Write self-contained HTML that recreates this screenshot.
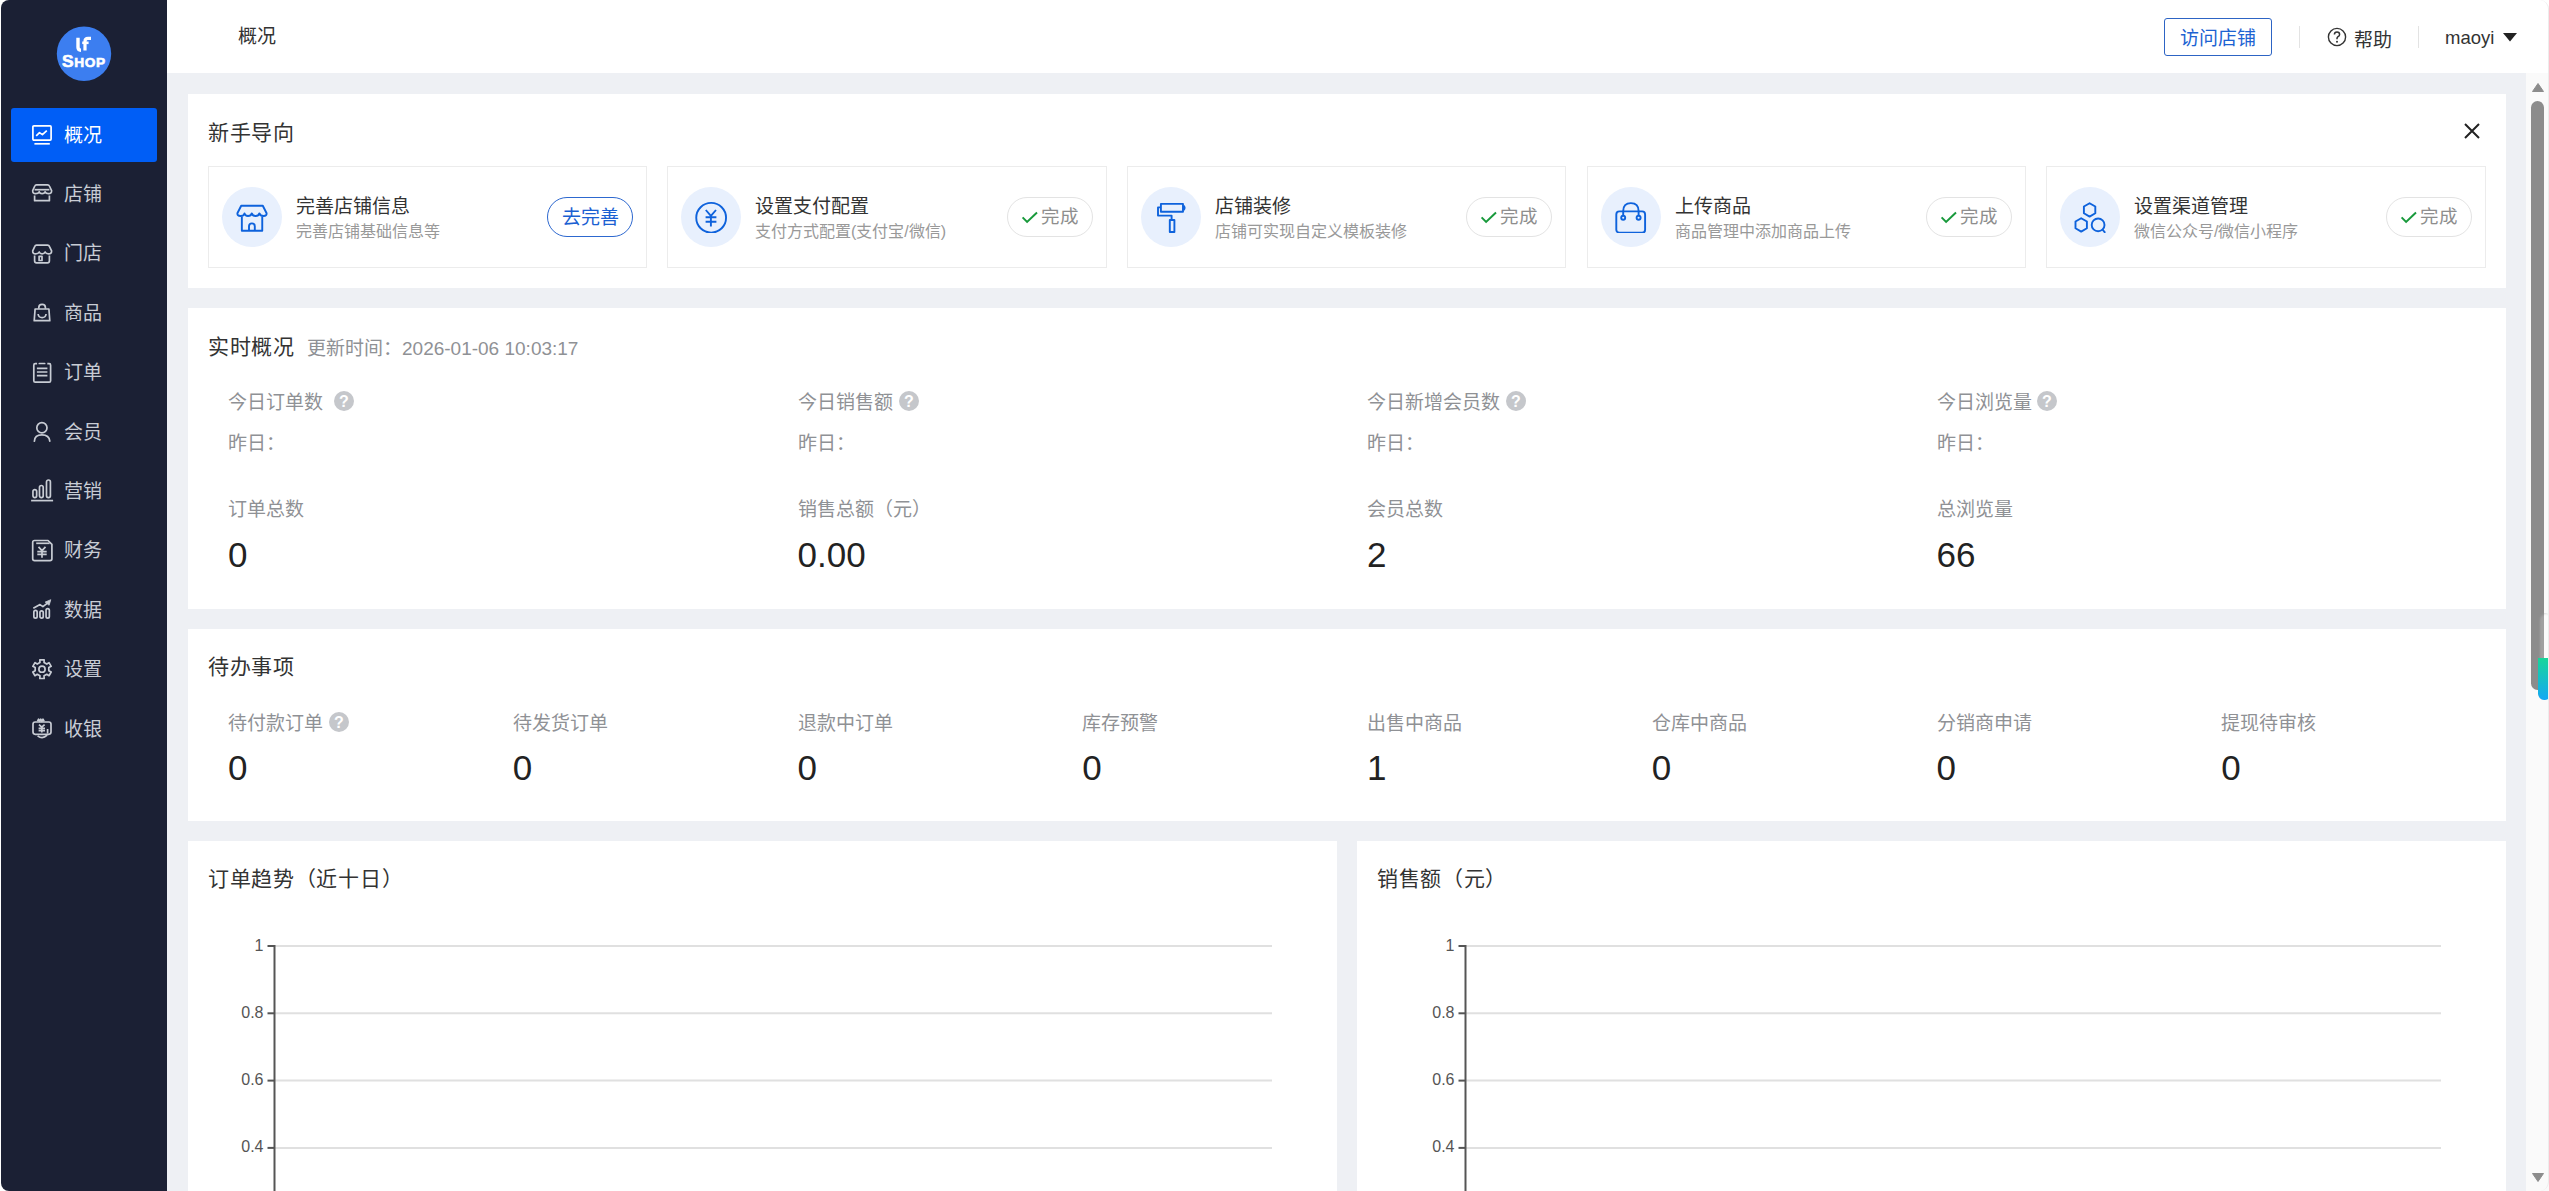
<!DOCTYPE html>
<html lang="zh-CN">
<head>
<meta charset="utf-8">
<style>
*{box-sizing:border-box;margin:0;padding:0}
html,body{width:2549px;height:1191px;overflow:hidden;background:#fff}
body{position:relative;font-family:"Liberation Sans",sans-serif;color:#333}
.t{position:absolute;white-space:nowrap;line-height:1}
#side{position:absolute;left:1px;top:0;width:166px;height:1191px;background:#1b2034;border-radius:8px 0 0 8px}
#logo{position:absolute;left:55px;top:26px;width:56px;height:56px}
.nav{position:absolute;left:10px;width:146px;height:54px;border-radius:3px;color:#c8ccd4}
.nav.on{background:#005ef6;color:#fff}
.nav svg{position:absolute;left:21px;top:17px;width:20px;height:20px;overflow:visible}
.nav span{position:absolute;left:53px;top:17.5px;font-size:19px;line-height:20px;white-space:nowrap}
#head{position:absolute;left:167px;top:0;width:2382px;height:73px;background:#fff;border-radius:0 9px 0 0}
#bc{left:71px;top:27px;font-size:19px;line-height:19px;color:#333}
#visit{position:absolute;left:1997px;top:18px;width:108px;height:38px;border:1px solid #2d64c4;border-radius:3px;color:#1d63d2;font-size:19px;line-height:36px;padding-top:2px;text-align:center}
.vd{position:absolute;top:26px;width:1px;height:22px;background:#e3e3e3}
#help{position:absolute;left:2160px;top:27px;width:20px;height:20px}
#helpt{left:2186.5px;top:30.5px;font-size:19px;line-height:19px;color:#333}
#user{left:2278px;top:28px;font-size:18.5px;line-height:19px;color:#333}
#caret{position:absolute;left:2336px;top:33px;width:14px;height:9px}
#main{position:absolute;left:167px;top:73px;width:2359px;height:1118px;background:#eef0f4}
#sb{position:absolute;left:2526px;top:73px;width:23px;height:1118px;background:#fafafa}
#sb .arr{position:absolute;left:6px;width:12px;height:9px}
#thumb{position:absolute;left:5px;top:28px;width:13px;height:589px;border-radius:7px;background:#8c8c8c}
#float{position:absolute;left:2538px;top:613px;width:13px;height:87px;border-radius:6px;background:rgba(255,255,255,0.18);box-shadow:inset 2px 1px 2px rgba(0,0,0,0.12);overflow:hidden}
#wb{position:absolute;left:2480px;top:0;width:69px;height:1191px;border-right:1px solid #ececec;border-radius:0 9px 9px 0;pointer-events:none}
#float .fg{position:absolute;left:0;top:45px;width:13px;height:42px;border-radius:0 0 6px 6px;background:linear-gradient(#17d69a,#14a8f5)}
.card{position:absolute;background:#fff;overflow:hidden}
.ctitle{position:absolute;font-size:21px;line-height:22px;color:#333;white-space:nowrap;letter-spacing:0.7px}
#close{position:absolute;left:2276px;top:29px;width:16px;height:16px}
.gi{position:absolute;top:166px;width:440px;height:102px;border:1px solid #ececec;background:#fff}
.gi .ic{position:absolute;left:13px;top:20px;width:60px;height:60px;border-radius:50%;background:#e8f0fd}
.gi .ic svg{position:absolute;left:14px;top:14px;width:32px;height:32px}
.gi .tt{position:absolute;left:87px;top:30px;font-size:19px;line-height:20px;color:#333;white-space:nowrap}
.gi .st{position:absolute;left:87px;top:56px;font-size:16px;line-height:17px;color:#999;white-space:nowrap}
.gi .bt{position:absolute;right:13px;top:30px;width:86px;height:40px;border-radius:20px;border:1px solid #e3e3e3;font-size:18.5px;color:#8e8e8e}
.gi .bt.go{border-color:#2d68cf;color:#1a60d2;text-align:center;line-height:39px;font-size:19px;text-indent:0}
.gi .bt svg{position:absolute;left:14px;top:11.5px;width:16px;height:13px;overflow:visible}
.gi .bt span{position:absolute;left:33px;top:9px;line-height:20px}
.upd{left:120px;top:30.5px;font-size:19px;line-height:19px;color:#8f9195}
.lbl{position:absolute;font-size:19px;line-height:19px;color:#8f9195;white-space:nowrap}
.num{position:absolute;font-size:35px;line-height:36px;color:#222;white-space:nowrap}
.q{position:absolute;width:20px;height:20px;border-radius:50%;background:#c5c7cb;color:#fff;font-size:16px;line-height:21px;text-align:center;font-weight:bold}
.chart{position:absolute}

</style>
</head>
<body>
<div id="side"><svg id="logo" viewBox="0 0 56 56"><circle cx="28" cy="27.75" r="27.2" fill="#3c7ef0"/><path d="M22 11.8 V21.3 Q22 24.2 25 24.2" fill="none" stroke="#fff" stroke-width="3.4"/><path d="M29 24.6 V15.2 Q29 12.3 32 12.3 H35" fill="none" stroke="#fff" stroke-width="3.2"/><path d="M26.2 16.8 H32.6" stroke="#fff" stroke-width="2.6"/><text x="6" y="41.4" font-family="Liberation Sans" font-weight="bold" font-size="17.4" fill="#fff" stroke="#fff" stroke-width="0.6" letter-spacing="0.6">S<tspan font-size="13.7">HOP</tspan></text></svg><div class="nav on" style="top:108.0px"><svg viewBox="0 0 20 20"><rect x="0.9" y="0.9" width="18.2" height="14.2" rx="1" fill="none" stroke="currentColor" stroke-width="1.7" stroke-linejoin="round"/><path d="M4.2 10.8 L7.5 7.6 L10.4 9.6 L14.8 5.6" fill="none" stroke="currentColor" stroke-width="1.7" stroke-linejoin="round"/><path d="M2.4 18.8 H17.8" fill="none" stroke="currentColor" stroke-width="1.7" stroke-linejoin="round" stroke-width="1.9"/></svg><span>概况</span></div><div class="nav" style="top:167.4px"><svg viewBox="0 0 20 20"><path d="M4.4 0.8 H15.6 Q16.9 0.8 17.4 2 L19.6 6.6 Q19.8 9.7 16.6 9.7 Q13.9 9.7 13.1 7.7 Q12.3 9.7 10.1 9.7 Q7.9 9.7 7.2 7.7 Q6.4 9.7 3.6 9.7 Q0.5 9.7 0.7 6.6 L2.8 2 Q3.3 0.8 4.4 0.8 Z" fill="none" stroke="currentColor" stroke-width="1.7" stroke-linejoin="round"/><path d="M2.6 5.7 H17.4" fill="none" stroke="currentColor" stroke-width="1.7" stroke-linejoin="round"/><path d="M2.6 11.5 V16.7 H17.4 V11.5" fill="none" stroke="currentColor" stroke-width="1.7" stroke-linejoin="round"/></svg><span>店铺</span></div><div class="nav" style="top:226.8px"><svg viewBox="0 0 20 20"><path d="M4.4 1.2 H15.6 Q16.9 1.2 17.4 2.4 L19.6 6.8 Q19.8 9.9 16.6 9.9 Q13.9 9.9 13.1 8 Q12.3 9.9 10.1 9.9 Q7.9 9.9 7.2 8 Q6.4 9.9 3.6 9.9 Q0.5 9.9 0.7 6.8 L2.8 2.4 Q3.3 1.2 4.4 1.2 Z" fill="none" stroke="currentColor" stroke-width="1.7" stroke-linejoin="round"/><path d="M2.6 11.4 V16.8 Q2.6 18.9 4.6 18.9 H15.4 Q17.4 18.9 17.4 16.8 V11.4" fill="none" stroke="currentColor" stroke-width="1.7" stroke-linejoin="round"/><rect x="7.1" y="12.3" width="2.9" height="4.2" fill="none" stroke="currentColor" stroke-width="1.7" stroke-linejoin="round" stroke-width="1.6"/></svg><span>门店</span></div><div class="nav" style="top:286.2px"><svg viewBox="0 0 20 20"><path d="M3.1 6 H16.9 L17.8 17.7 H2.2 Z" fill="none" stroke="currentColor" stroke-width="1.7" stroke-linejoin="round"/><path d="M6.8 5.8 V4.6 Q6.8 1.4 10.1 1.4 Q13.4 1.4 13.4 4.6 V5.8" fill="none" stroke="currentColor" stroke-width="1.7" stroke-linejoin="round"/><path d="M6.1 11 Q6.6 14.6 10.1 14.6 Q13.6 14.6 14.1 11" fill="none" stroke="currentColor" stroke-width="1.7" stroke-linejoin="round"/></svg><span>商品</span></div><div class="nav" style="top:345.6px"><svg viewBox="0 0 20 20"><path d="M5.1 0.7 H3.2 Q1.8 0.7 1.8 2.2 V17.7 Q1.8 19.2 3.2 19.2 H17.2 Q18.6 19.2 18.6 17.7 V2.2 Q18.6 0.7 17.2 0.7 H15.3" fill="none" stroke="currentColor" stroke-width="1.7" stroke-linejoin="round"/><path d="M7.3 0.5 H12.7" fill="none" stroke="currentColor" stroke-width="1.7" stroke-linejoin="round" stroke-width="2.2" stroke-linecap="round"/><path d="M4.9 5.3 H15.4 M4.9 9 H15.4 M4.9 12.7 H15.4" fill="none" stroke="currentColor" stroke-width="1.7" stroke-linejoin="round"/></svg><span>订单</span></div><div class="nav" style="top:405.0px"><svg viewBox="0 0 20 20"><circle cx="9.9" cy="5.7" r="5.1" fill="none" stroke="currentColor" stroke-width="1.7" stroke-linejoin="round"/><path d="M2.4 19.2 Q2.6 12.9 9.9 12.9 Q17.2 12.9 17.8 19.2" fill="none" stroke="currentColor" stroke-width="1.7" stroke-linejoin="round" stroke-width="1.8" stroke-linecap="round"/></svg><span>会员</span></div><div class="nav" style="top:464.4px"><svg viewBox="0 0 20 20"><rect x="0.95" y="8.6" width="3.7" height="8" rx="1.85" fill="none" stroke="currentColor" stroke-width="1.7" stroke-linejoin="round" stroke-width="1.6"/><rect x="7.5" y="4.5" width="3.7" height="12.1" rx="1.85" fill="none" stroke="currentColor" stroke-width="1.7" stroke-linejoin="round" stroke-width="1.6"/><rect x="14.5" y="-1" width="3.9" height="17.6" rx="1.9" fill="none" stroke="currentColor" stroke-width="1.7" stroke-linejoin="round" stroke-width="1.6"/><path d="M-0.9 19.6 H21.1" fill="none" stroke="currentColor" stroke-width="1.7" stroke-linejoin="round" stroke-width="1.8"/></svg><span>营销</span></div><div class="nav" style="top:523.8px"><svg viewBox="0 0 20 20"><path d="M2.6 -0.5 H16 L19.9 3.4 V17.8 Q19.9 19.7 18 19.7 H2.6 Q0.7 19.7 0.7 17.8 V1.4 Q0.7 -0.5 2.6 -0.5 Z" fill="none" stroke="currentColor" stroke-width="1.7" stroke-linejoin="round"/><path d="M4.2 2.3 H17.6" fill="none" stroke="currentColor" stroke-width="1.7" stroke-linejoin="round" stroke-width="1.5"/><path d="M6.5 5.8 L10 9.6 L13.5 5.8 M10 9.6 V16.7 M5.3 10.6 H14.7 M5.3 13.3 H14.7" fill="none" stroke="currentColor" stroke-width="1.7" stroke-linejoin="round" stroke-width="1.8"/></svg><span>财务</span></div><div class="nav" style="top:583.2px"><svg viewBox="0 0 20 20"><rect x="1.85" y="10.4" width="3.3" height="7.8" rx="1.65" fill="none" stroke="currentColor" stroke-width="1.7" stroke-linejoin="round" stroke-width="1.5"/><rect x="7.95" y="10.9" width="3.3" height="7.3" rx="1.65" fill="none" stroke="currentColor" stroke-width="1.7" stroke-linejoin="round" stroke-width="1.5"/><rect x="14.05" y="8.7" width="3.3" height="9.5" rx="1.65" fill="none" stroke="currentColor" stroke-width="1.7" stroke-linejoin="round" stroke-width="1.5"/><path d="M1.3 8.3 L8 4.6 L10.9 6.6 L15.8 2.8" fill="none" stroke="currentColor" stroke-width="1.7" stroke-linejoin="round" stroke-width="1.8"/><path d="M13.2 2.1 L18.8 -0.3 L17.1 5.3 Z" fill="currentColor" stroke="currentColor" stroke-width="0.8" stroke-linejoin="round"/></svg><span>数据</span></div><div class="nav" style="top:642.6px"><svg viewBox="0 0 20 20"><path d="M7.84 -0.20 L12.16 -0.20 L12.05 2.46 L14.77 4.03 L17.02 2.60 L19.18 6.34 L16.82 7.58 L16.82 10.72 L19.18 11.96 L17.02 15.70 L14.77 14.27 L12.05 15.84 L12.16 18.50 L7.84 18.50 L7.95 15.84 L5.23 14.27 L2.98 15.70 L0.82 11.96 L3.18 10.72 L3.18 7.58 L0.82 6.34 L2.98 2.60 L5.23 4.03 L7.95 2.46 Z" fill="none" stroke="currentColor" stroke-width="1.7" stroke-linejoin="round"/><circle cx="10" cy="9.15" r="3.1" fill="none" stroke="currentColor" stroke-width="1.7" stroke-linejoin="round"/></svg><span>设置</span></div><div class="nav" style="top:702.0px"><svg viewBox="0 0 20 20"><rect x="1" y="3" width="18" height="12.3" rx="2.2" fill="none" stroke="currentColor" stroke-width="1.7" stroke-linejoin="round"/><path d="M5.5 2.4 L6.6 0.2 L7.7 2.4 L8.8 0.2 L9.9 2.4 L11 0.2 L12.1 2.4" fill="none" stroke="currentColor" stroke-width="1.7" stroke-linejoin="round" stroke-width="1.3"/><path d="M7 5.6 L9.8 8.2 L12.6 5.6 M9.8 8.2 V13.6 M6.6 9.4 H13 M6.6 11.7 H13" fill="none" stroke="currentColor" stroke-width="1.7" stroke-linejoin="round" stroke-width="1.7"/><path d="M15.6 10 V14.6" fill="none" stroke="currentColor" stroke-width="1.7" stroke-linejoin="round" stroke-width="1.6"/><path d="M5.6 16.8 Q10.4 20.6 15.2 16.2" fill="none" stroke="currentColor" stroke-width="1.7" stroke-linejoin="round"/></svg><span>收银</span></div></div><div id="head"><div class="t" id="bc">概况</div><div id="visit">访问店铺</div><div class="vd" style="left:2132px"></div><svg id="help" viewBox="0 0 20 20"><circle cx="10" cy="10" r="8.6" fill="none" stroke="#333" stroke-width="1.4"/><path d="M7.4 7.6 Q7.4 5 10 5 Q12.6 5 12.6 7.4 Q12.6 9 10.8 9.8 Q10 10.3 10 11.6 V12.2" fill="none" stroke="#333" stroke-width="1.5"/><circle cx="10" cy="14.8" r="1" fill="#333"/></svg><div class="t" id="helpt">帮助</div><div class="vd" style="left:2251px"></div><div class="t" id="user">maoyi</div><svg id="caret" viewBox="0 0 14 9"><path d="M0 0 H14 L7 8.5 Z" fill="#222"/></svg></div><div id="main"></div><div id="sb"><svg class="arr" style="top:10px" viewBox="0 0 12 9"><path d="M6 0.5 L11.5 8.5 H0.5 Z" fill="#8c8c8c" stroke="#8c8c8c" stroke-linejoin="round"/></svg><div id="thumb"></div><svg class="arr" style="top:1100px" viewBox="0 0 12 9"><path d="M0.5 0.5 H11.5 L6 8.5 Z" fill="#8c8c8c" stroke="#8c8c8c" stroke-linejoin="round"/></svg></div><div id="float"><div class="fg"></div></div><div id="wb"></div><div class="card" style="left:188px;top:94px;width:2318px;height:194px"><div class="ctitle" style="left:20px;top:28px">新手导向</div><svg id="close" viewBox="0 0 16 16"><path d="M1 1 L15 15 M15 1 L1 15" stroke="#222" stroke-width="2"/></svg></div><div class="gi" style="left:208px;width:439px"><div class="ic"><svg viewBox="0 0 32 32"><path d="M5.2 4.7 H26.8 L30.6 12.2 Q30.8 15 27.6 15 Q24.2 15 23.4 12.4 Q22.6 15 19.6 15 Q16.6 15 15.8 12.4 Q15 15 12 15 Q9 15 8.5 12.4 Q7.8 15 4.4 15 Q1.2 15 1.4 12.2 Z" fill="none" stroke="#0e62dc" stroke-width="1.9" stroke-linejoin="round"/><path d="M5.85 15.4 V29.75 H26.25 V15.4" fill="none" stroke="#0e62dc" stroke-width="1.9" stroke-linejoin="round"/><path d="M13 29.75 V25.2 Q13 22.35 15.9 22.35 Q18.8 22.35 18.8 25.2 V29.75" fill="none" stroke="#0e62dc" stroke-width="1.9" stroke-linejoin="round"/></svg></div><div class="tt">完善店铺信息</div><div class="st">完善店铺基础信息等</div><div class="bt go">去完善</div></div><div class="gi" style="left:667px;width:440px"><div class="ic"><svg viewBox="0 0 32 32"><circle cx="16.15" cy="16.75" r="14.9" fill="none" stroke="#0e62dc" stroke-width="1.9" stroke-linejoin="round"/><path d="M10.8 9 L15.9 14.9 L21 9 M15.9 14.9 V25.6 M10.6 16.2 H21.4 M10.6 20.8 H21.4" fill="none" stroke="#0e62dc" stroke-width="1.9" stroke-linejoin="round" stroke-width="1.9"/></svg></div><div class="tt">设置支付配置</div><div class="st">支付方式配置(支付宝/微信)</div><div class="bt done"><svg viewBox="0 0 16 13"><path d="M0.6 7.4 L5.1 11.9 L15 2.6" fill="none" stroke="#18993b" stroke-width="2"/></svg><span>完成</span></div></div><div class="gi" style="left:1127px;width:439px"><div class="ic"><svg viewBox="0 0 32 32"><path d="M5.9 2.9 H28 V10.7 H5.9 Z" fill="none" stroke="#0e62dc" stroke-width="1.9" stroke-linejoin="round" stroke-width="2.2"/><path d="M28.6 4.6 Q30.6 6.8 28.6 9" fill="none" stroke="#0e62dc" stroke-width="1.9" stroke-linejoin="round" stroke-width="1.5"/><path d="M5.9 6.4 H3 V14.6 H16.6 V18.5" fill="none" stroke="#0e62dc" stroke-width="1.9" stroke-linejoin="round" stroke-width="2.2"/><path d="M14.8 19 H19.4 V31 H14.8 Z" fill="none" stroke="#0e62dc" stroke-width="1.9" stroke-linejoin="round" stroke-width="2.2"/></svg></div><div class="tt">店铺装修</div><div class="st">店铺可实现自定义模板装修</div><div class="bt done"><svg viewBox="0 0 16 13"><path d="M0.6 7.4 L5.1 11.9 L15 2.6" fill="none" stroke="#18993b" stroke-width="2"/></svg><span>完成</span></div></div><div class="gi" style="left:1587px;width:439px"><div class="ic"><svg viewBox="0 0 32 32"><rect x="1.3" y="10.4" width="28.8" height="21.4" rx="3" fill="none" stroke="#0e62dc" stroke-width="1.9" stroke-linejoin="round" stroke-width="2.2"/><path d="M8.2 14.8 V10 Q8.2 2.1 15.9 2.1 Q23.6 2.1 23.6 10 V14.8" fill="none" stroke="#0e62dc" stroke-width="1.9" stroke-linejoin="round" stroke-width="2.2"/><circle cx="8.2" cy="16.8" r="2" fill="none" stroke="#0e62dc" stroke-width="1.9" stroke-linejoin="round" stroke-width="2.1"/><circle cx="23.6" cy="16.8" r="2" fill="none" stroke="#0e62dc" stroke-width="1.9" stroke-linejoin="round" stroke-width="2.1"/></svg></div><div class="tt">上传商品</div><div class="st">商品管理中添加商品上传</div><div class="bt done"><svg viewBox="0 0 16 13"><path d="M0.6 7.4 L5.1 11.9 L15 2.6" fill="none" stroke="#18993b" stroke-width="2"/></svg><span>完成</span></div></div><div class="gi" style="left:2046px;width:440px"><div class="ic"><svg viewBox="0 0 32 32"><path d="M15.6 2.2 L21.3 5.55 V12.25 L15.6 15.6 L9.9 12.25 V5.55 Z" fill="none" stroke="#0e62dc" stroke-width="1.9" stroke-linejoin="round" stroke-width="2.1"/><path d="M7.2 17.2 L12.9 20.55 V27.25 L7.2 30.6 L1.5 27.25 V20.55 Z" fill="none" stroke="#0e62dc" stroke-width="1.9" stroke-linejoin="round" stroke-width="2.1"/><circle cx="24.1" cy="23.9" r="6.4" fill="none" stroke="#0e62dc" stroke-width="1.9" stroke-linejoin="round" stroke-width="2.2"/><path d="M28.6 28.6 L31.2 31.8" fill="none" stroke="#0e62dc" stroke-width="1.9" stroke-linejoin="round" stroke-width="2.2"/></svg></div><div class="tt">设置渠道管理</div><div class="st">微信公众号/微信小程序</div><div class="bt done"><svg viewBox="0 0 16 13"><path d="M0.6 7.4 L5.1 11.9 L15 2.6" fill="none" stroke="#18993b" stroke-width="2"/></svg><span>完成</span></div></div><div class="card" style="left:188px;top:308px;width:2318px;height:301px"><div class="ctitle" style="left:20px;top:28px">实时概况</div><div class="t upd" style="left:119px">更新时间：2026-01-06 10:03:17</div><div class="lbl" style="left:40.0px;top:84.5px">今日订单数</div><span class="q" style="left:146px;top:83px">?</span><div class="lbl" style="left:40.0px;top:125.5px">昨日：</div><div class="lbl" style="left:40.0px;top:192px">订单总数</div><div class="num" style="left:40.0px;top:228.5px">0</div><div class="lbl" style="left:609.5px;top:84.5px">今日销售额</div><span class="q" style="left:711px;top:83px">?</span><div class="lbl" style="left:609.5px;top:125.5px">昨日：</div><div class="lbl" style="left:609.5px;top:192px">销售总额（元）</div><div class="num" style="left:609.5px;top:228.5px">0.00</div><div class="lbl" style="left:1179.0px;top:84.5px">今日新增会员数</div><span class="q" style="left:1318px;top:83px">?</span><div class="lbl" style="left:1179.0px;top:125.5px">昨日：</div><div class="lbl" style="left:1179.0px;top:192px">会员总数</div><div class="num" style="left:1179.0px;top:228.5px">2</div><div class="lbl" style="left:1748.5px;top:84.5px">今日浏览量</div><span class="q" style="left:1849px;top:83px">?</span><div class="lbl" style="left:1748.5px;top:125.5px">昨日：</div><div class="lbl" style="left:1748.5px;top:192px">总浏览量</div><div class="num" style="left:1748.5px;top:228.5px">66</div></div><div class="card" style="left:188px;top:629px;width:2318px;height:192px"><div class="ctitle" style="left:20px;top:27px">待办事项</div><div class="lbl" style="left:40.0px;top:84.5px">待付款订单</div><span class="q" style="left:141px;top:83px">?</span><div class="num" style="left:40.0px;top:121px">0</div><div class="lbl" style="left:324.8px;top:84.5px">待发货订单</div><div class="num" style="left:324.8px;top:121px">0</div><div class="lbl" style="left:609.5px;top:84.5px">退款中订单</div><div class="num" style="left:609.5px;top:121px">0</div><div class="lbl" style="left:894.2px;top:84.5px">库存预警</div><div class="num" style="left:894.2px;top:121px">0</div><div class="lbl" style="left:1179.0px;top:84.5px">出售中商品</div><div class="num" style="left:1179.0px;top:121px">1</div><div class="lbl" style="left:1463.8px;top:84.5px">仓库中商品</div><div class="num" style="left:1463.8px;top:121px">0</div><div class="lbl" style="left:1748.5px;top:84.5px">分销商申请</div><div class="num" style="left:1748.5px;top:121px">0</div><div class="lbl" style="left:2033.2px;top:84.5px">提现待审核</div><div class="num" style="left:2033.2px;top:121px">0</div></div><div class="card" style="left:188px;top:841px;width:1149px;height:400px"><div class="ctitle" style="left:20px;top:26.5px">订单趋势（近十日）</div><svg class="chart" style="left:0;top:0" width="1149" height="360" viewBox="0 0 1149 360"><path d="M86.5 105.0 H1084.0" stroke="#e0e0e0" stroke-width="2"/><path d="M79.5 105.0 H86.5" stroke="#555" stroke-width="2"/><text x="75.5" y="109.5" text-anchor="end" font-size="16" fill="#555" font-family="Liberation Sans">1</text><path d="M86.5 172.3 H1084.0" stroke="#e0e0e0" stroke-width="2"/><path d="M79.5 172.3 H86.5" stroke="#555" stroke-width="2"/><text x="75.5" y="176.8" text-anchor="end" font-size="16" fill="#555" font-family="Liberation Sans">0.8</text><path d="M86.5 239.6 H1084.0" stroke="#e0e0e0" stroke-width="2"/><path d="M79.5 239.6 H86.5" stroke="#555" stroke-width="2"/><text x="75.5" y="244.1" text-anchor="end" font-size="16" fill="#555" font-family="Liberation Sans">0.6</text><path d="M86.5 306.9 H1084.0" stroke="#e0e0e0" stroke-width="2"/><path d="M79.5 306.9 H86.5" stroke="#555" stroke-width="2"/><text x="75.5" y="311.4" text-anchor="end" font-size="16" fill="#555" font-family="Liberation Sans">0.4</text><path d="M86.5 374.2 H1084.0" stroke="#e0e0e0" stroke-width="2"/><path d="M79.5 374.2 H86.5" stroke="#555" stroke-width="2"/><text x="75.5" y="378.7" text-anchor="end" font-size="16" fill="#555" font-family="Liberation Sans">0.2</text><path d="M86.5 104 V360" stroke="#555" stroke-width="2"/></svg></div><div class="card" style="left:1357px;top:841px;width:1149px;height:400px"><div class="ctitle" style="left:20px;top:26.5px">销售额（元）</div><svg class="chart" style="left:0;top:0" width="1149" height="360" viewBox="0 0 1149 360"><path d="M108.5 105.0 H1084.0" stroke="#e0e0e0" stroke-width="2"/><path d="M101.5 105.0 H108.5" stroke="#555" stroke-width="2"/><text x="97.5" y="109.5" text-anchor="end" font-size="16" fill="#555" font-family="Liberation Sans">1</text><path d="M108.5 172.3 H1084.0" stroke="#e0e0e0" stroke-width="2"/><path d="M101.5 172.3 H108.5" stroke="#555" stroke-width="2"/><text x="97.5" y="176.8" text-anchor="end" font-size="16" fill="#555" font-family="Liberation Sans">0.8</text><path d="M108.5 239.6 H1084.0" stroke="#e0e0e0" stroke-width="2"/><path d="M101.5 239.6 H108.5" stroke="#555" stroke-width="2"/><text x="97.5" y="244.1" text-anchor="end" font-size="16" fill="#555" font-family="Liberation Sans">0.6</text><path d="M108.5 306.9 H1084.0" stroke="#e0e0e0" stroke-width="2"/><path d="M101.5 306.9 H108.5" stroke="#555" stroke-width="2"/><text x="97.5" y="311.4" text-anchor="end" font-size="16" fill="#555" font-family="Liberation Sans">0.4</text><path d="M108.5 374.2 H1084.0" stroke="#e0e0e0" stroke-width="2"/><path d="M101.5 374.2 H108.5" stroke="#555" stroke-width="2"/><text x="97.5" y="378.7" text-anchor="end" font-size="16" fill="#555" font-family="Liberation Sans">0.2</text><path d="M108.5 104 V360" stroke="#555" stroke-width="2"/></svg></div>
</body>
</html>
